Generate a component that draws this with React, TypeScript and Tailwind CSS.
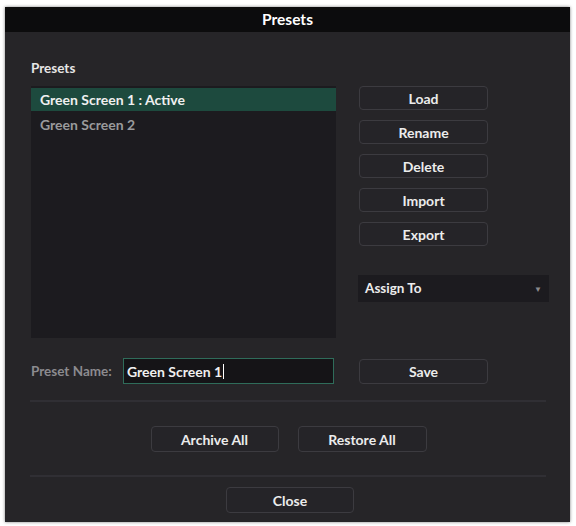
const BUTTONS = ['Load', 'Rename', 'Delete', 'Import', 'Export'];

function Btn({ label, className = '' }: { label: string; className?: string }) {
  return (
    <div
      className={`shrink-0 flex items-center justify-center rounded-[4px] border border-[#3c3b40] bg-[#252428] text-[14px] font-bold text-[#ececec] ${className}`}
    >
      {label}
    </div>
  );
}

export default function App() {
  return (
    <div
      className="w-[576px] h-[526px] bg-white pt-[7px] pl-[5px]"
      style={{ fontFamily: 'Lato, "Open Sans", sans-serif' }}
    >
      <div className="w-[565px] h-[515px] bg-[#262528] flex flex-col shadow-[0_0_3px_rgba(0,0,0,0.5)]">
        {/* Title bar */}
        <div className="h-[25px] bg-[#0c0c0d] flex items-center justify-center text-[15.5px] font-bold text-white">
          Presets
        </div>

        <div className="pl-[26px] pr-[21px] pt-[28px] flex flex-col">
          <div className="text-[13.5px] font-bold text-[#e6e6e6] leading-[16px] mb-[10px]">Presets</div>

          <div className="flex">
            {/* Preset list */}
            <div className="shrink-0 w-[305px] h-[252px] bg-[#1c1b1f] pt-[2px] flex flex-col">
              <div className="h-[23px] bg-[#1d4a3e] flex items-center pl-[9px] text-[14px] font-bold text-[#f0f0f0]">
                Green Screen 1 : Active
              </div>
              <div className="h-[27px] flex items-center pl-[9px] text-[14px] font-bold text-[#9a9a9c]">
                Green Screen 2
              </div>
            </div>

            {/* Right column */}
            <div className="ml-[22px] flex flex-col">
              <div className="flex flex-col gap-[10px] pl-[1px]">
                {BUTTONS.map(b => (
                  <Btn key={b} label={b} className="w-[129px] h-[24px]" />
                ))}
              </div>
              <div className="mt-[29px] w-[191px] h-[27px] bg-[#1c1b1f] flex items-center justify-between px-[7px] text-[13.5px] font-bold text-[#ececec]">
                <span>Assign To</span>
                <span className="text-[8px] text-[#8a8a8c]">▼</span>
              </div>
            </div>
          </div>

          {/* Preset name row */}
          <div className="flex items-center mt-[20px]">
            <div className="w-[92px] shrink-0 text-[13.5px] font-bold text-[#8c8b8f]">Preset Name:</div>
            <div className="shrink-0 w-[211px] h-[26px] border border-[#2f6c5a] bg-[#151417] flex items-center pl-[3px] text-[14px] font-bold text-[#f0f0f0]">
              Green Screen 1<span className="ml-[1px] w-[1px] h-[15px] bg-white" />
            </div>
            <Btn label="Save" className="ml-[25px] w-[129px] h-[25px]" />
          </div>
        </div>

        <div className="mt-[16px] ml-[25px] mr-[24px] h-[2px] bg-[#302f34]" />

        <div className="flex justify-center gap-[19px] mt-[24px] pl-[2px]">
          <Btn label="Archive All" className="w-[128px] h-[26px]" />
          <Btn label="Restore All" className="w-[129px] h-[26px]" />
        </div>

        <div className="mt-[23px] ml-[25px] mr-[24px] h-[2px] bg-[#302f34]" />

        <div className="flex justify-center mt-[10px] pl-[5px]">
          <Btn label="Close" className="w-[128px] h-[26px]" />
        </div>
      </div>
    </div>
  );
}
